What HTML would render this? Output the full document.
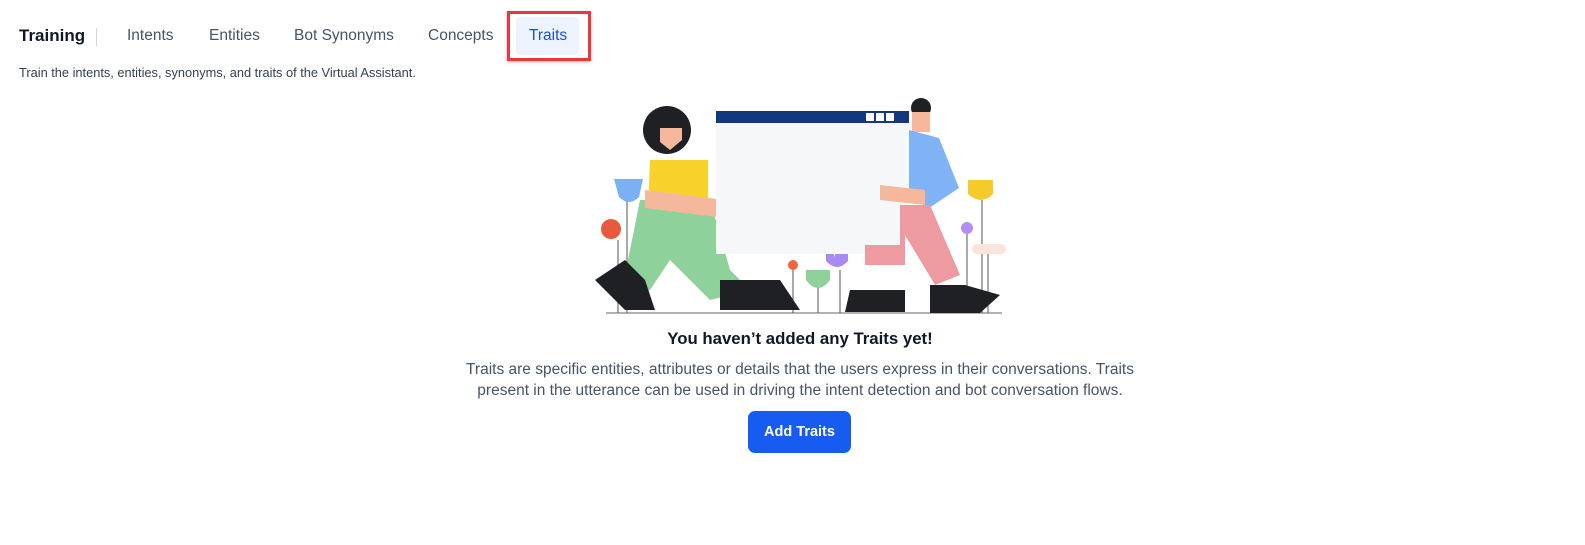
<!DOCTYPE html>
<html><head><style>
body{margin:0;width:1585px;height:545px;background:#fff;font-family:"Liberation Sans",sans-serif;position:relative;overflow:hidden}
.a{position:absolute;white-space:nowrap}
.tab{position:absolute;top:27px;font-size:15.5px;color:#475467}
</style></head><body>
<div class="a" style="left:19px;top:26px;font-size:17px;font-weight:bold;color:#101828">Training</div>
<div class="a" style="left:96px;top:28px;width:1px;height:18px;background:#d0d5dd"></div>
<div class="tab" style="left:127px">Intents</div>
<div class="tab" style="left:209px">Entities</div>
<div class="tab" style="left:294px">Bot Synonyms</div>
<div class="tab" style="left:428px">Concepts</div>
<div class="a" style="left:516px;top:17px;width:63px;height:38px;background:#eef4ff;border-radius:4px"></div>
<div class="tab" style="left:529px;color:#1d4ed8">Traits</div>
<div class="a" style="left:507px;top:11px;width:84px;height:50px;border:3px solid #e5393b;box-sizing:border-box;box-shadow:0 1px 3px rgba(0,0,0,.3)"></div>
<div class="a" style="left:19px;top:65px;font-size:12.8px;color:#344054">Train the intents, entities, synonyms, and traits of the Virtual Assistant.</div>
<svg class="a" style="left:0;top:0" width="1585" height="330">
<line x1="606" y1="313" x2="1002" y2="313" stroke="#999" stroke-width="1.5"/>
<g stroke="#555" stroke-width="1"><line x1="627" y1="200" x2="627" y2="313"/><line x1="618" y1="240" x2="618" y2="313"/><line x1="793" y1="268" x2="793" y2="313"/><line x1="818" y1="285" x2="818" y2="313"/><line x1="840" y1="270" x2="840" y2="313"/><line x1="982" y1="200" x2="982" y2="313"/><line x1="967" y1="232" x2="967" y2="313"/><line x1="988" y1="250" x2="988" y2="313"/></g>
<path d="M614 179 h29 l-4 18 q-10 10 -20 0z" fill="#7bb0f5"/>
<circle cx="611" cy="229" r="10" fill="#e85a3c"/>
<path d="M968 180 h25 v14 q-12 12 -25 0z" fill="#f7ca2c"/>
<circle cx="967" cy="228" r="6" fill="#b48ef5"/>
<rect x="972" y="244" width="34" height="10" rx="5" fill="#fbe4de"/>
<circle cx="793" cy="265" r="5" fill="#f2653e"/>
<path d="M806 270 h24 v10 q-12 16 -24 0z" fill="#8fd19b"/>
<path d="M826 247 q8 -4 8 10 q6 -14 14 -10 v14 q-11 12 -22 0z" fill="#a98af0"/>
<circle cx="667" cy="130" r="24" fill="#1f2024"/>
<path d="M660 128 l22 0 v12 l-12 10 l-10 -8z" fill="#f6b89c"/>
<path d="M650 160 h58 v50 h-60z" fill="#f8d22a"/>
<path d="M640 200 l70 0 l20 70 l20 20 l-40 10 l-40 -40 l-20 30 l-30 10z" fill="#8fd19b"/>
<path d="M595 280 l30 -20 l20 20 l10 30 l-30 0z" fill="#1f2024"/>
<path d="M720 280 h60 l20 30 h-80z" fill="#1f2024"/>
<path d="M645 190 l80 10 v18 l-80 -10z" fill="#f6b89c"/>
<rect x="716" y="111" width="193" height="143" fill="#f6f7f9"/>
<rect x="716" y="111" width="193" height="12" fill="#12397e"/>
<rect x="866" y="113" width="8" height="8" fill="#fff"/><rect x="876" y="113" width="8" height="8" fill="#fff"/><rect x="886" y="113" width="8" height="8" fill="#fff"/>
<circle cx="921" cy="108" r="10" fill="#1f2024"/>
<path d="M912 112 h18 v20 h-18z" fill="#f6b89c"/>
<path d="M909 130 l30 8 l20 50 l-30 20 l-20 -10z" fill="#7fb3f5"/>
<path d="M880 185 l45 5 v15 l-45 -5z" fill="#f6b89c"/>
<path d="M900 205 l30 0 l30 70 l-25 10 l-30 -50 l-0 30 l-40 0 v-20 h35z" fill="#ee9aa1"/>
<path d="M850 290 h55 v22 h-60z" fill="#1f2024"/>
<path d="M930 285 h35 l35 10 l-20 18 h-50z" fill="#1f2024"/>
</svg>
<div class="a" style="left:0;width:1600px;top:329px;text-align:center;font-size:16.8px;font-weight:bold;color:#101828">You haven’t added any Traits yet!</div>
<div class="a" style="left:0;width:1600px;top:359px;text-align:center;font-size:15.5px;line-height:21px;color:#475467">Traits are specific entities, attributes or details that the users express in their conversations. Traits<br>present in the utterance can be used in driving the intent detection and bot conversation flows.</div>
<div class="a" style="left:748px;top:411px;width:103px;height:42px;border-radius:7px;background:#175cf0;color:#fff;font-size:14.5px;font-weight:bold;line-height:42px;text-align:center">Add Traits</div>
</body></html>
